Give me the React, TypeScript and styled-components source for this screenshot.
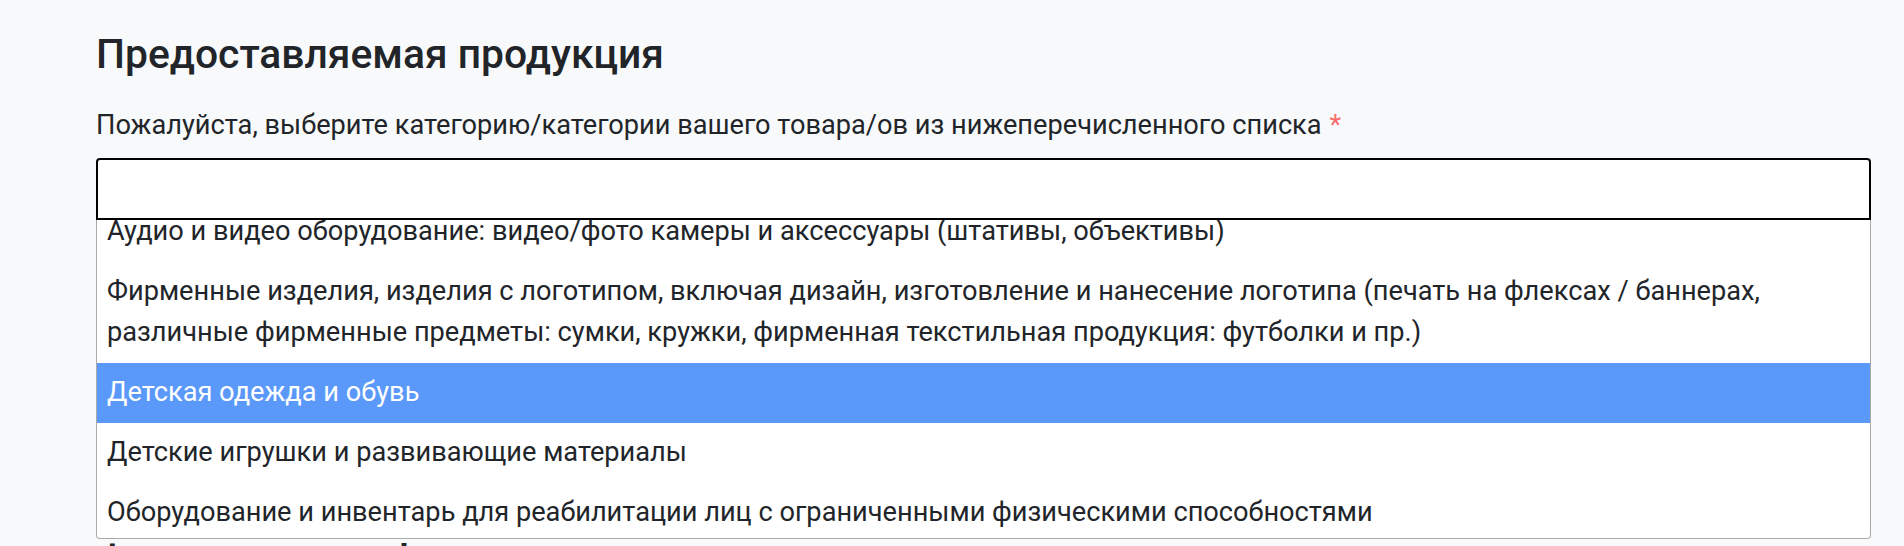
import React, { useEffect, useRef } from 'react';
import styled, { createGlobalStyle } from 'styled-components';

const GlobalStyle = createGlobalStyle`
  html, body {
    margin: 0;
    padding: 0;
    background: #f8f9fa;
  }
  body {
    font-family: Roboto, "Liberation Sans", Arial, sans-serif;
    color: #212529;
  }
`;

const Wrapper = styled.div`
  padding: 30px 33px 0 96px;
  height: 546px;
  box-sizing: border-box;
  overflow: hidden;
`;

const Title = styled.h2`
  margin: 0;
  font-size: 40.8px;
  line-height: 49px;
  font-weight: 500;
  color: #212529;
`;

const Label = styled.label`
  display: block;
  margin-top: 26px;
  font-size: 27.2px;
  line-height: 40.8px;
  color: #212529;
`;

const Required = styled.span`
  color: #f86c6b;
  margin-left: 8px;
`;

const Field = styled.div`
  position: relative;
  margin-top: 12px;
`;

const Input = styled.input`
  display: block;
  width: 100%;
  height: 62px;
  box-sizing: border-box;
  border: 2px solid #000;
  border-radius: 4px 4px 0 0;
  background: #fff;
  font-family: inherit;
  font-size: 27.2px;
  padding: 0 10px;
  outline: none;
`;

const Menu = styled.ul`
  position: absolute;
  top: 100%;
  left: 0;
  right: 0;
  height: 319px;
  margin: 0;
  padding: 0;
  list-style: none;
  box-sizing: border-box;
  background: #fff;
  border: 1px solid #aaa;
  border-top: none;
  border-radius: 0 0 4px 4px;
  overflow: hidden;
  z-index: 2;
`;

const Option = styled.li<{ $active?: boolean }>`
  padding: 9.6px 10px;
  font-size: 27.2px;
  line-height: 40.8px;
  color: ${(p) => (p.$active ? '#fff' : '#212529')};
  background: ${(p) => (p.$active ? '#5a99f9' : 'transparent')};
`;

const NextTitle = styled(Title)`
  margin-top: 316px;
`;

const options = [
  'Аудио и видео оборудование: видео/фото камеры и аксессуары (штативы, объективы)',
  'Фирменные изделия, изделия с логотипом, включая дизайн, изготовление и нанесение логотипа (печать на флексах / баннерах, различные фирменные предметы: сумки, кружки, фирменная текстильная продукция: футболки и пр.)',
  'Детская одежда и обувь',
  'Детские игрушки и развивающие материалы',
  'Оборудование и инвентарь для реабилитации лиц с ограниченными физическими способностями',
];

const App = () => {
  const menuRef = useRef<HTMLUListElement>(null);

  useEffect(() => {
    // list is scrolled a little, first option is cut at the top
    if (menuRef.current) menuRef.current.scrollTop = 18;
  }, []);

  return (
    <>
      <GlobalStyle />
      <Wrapper>
        <Title>Предоставляемая продукция</Title>
        <Label>
          Пожалуйста, выберите категорию/категории вашего товара/ов из нижеперечисленного списка
          <Required>*</Required>
        </Label>
        <Field>
          <Input type="text" />
          <Menu ref={menuRef}>
            {options.map((opt, i) => (
              <Option key={i} $active={i === 2}>
                {opt}
              </Option>
            ))}
          </Menu>
        </Field>
        <NextTitle>Финансовая информация</NextTitle>
      </Wrapper>
    </>
  );
};

export default App;
